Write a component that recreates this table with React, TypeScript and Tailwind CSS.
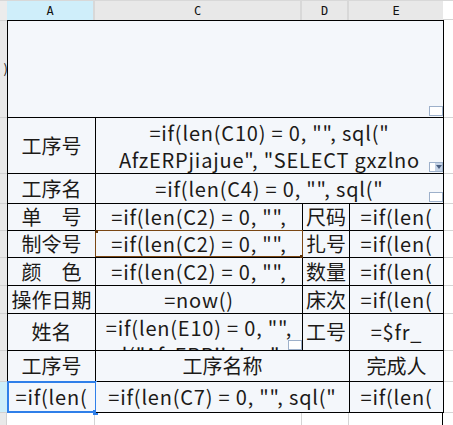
import type { ReactNode } from 'react';

const font = { fontFamily: '"Noto Sans CJK SC", "Noto Sans", sans-serif' };

function Comment({ className = '', drop = false }: { className?: string; drop?: boolean }) {
  return (
    <div className={`absolute flex h-[10px] w-[14px] border border-[#9db0ca] bg-white ${className}`}>
      {drop && (
        <div className="ml-auto flex h-full w-[7px] items-center justify-center bg-[#c5d3e6]">
          <div className="h-0 w-0 border-l-[3px] border-r-[3px] border-t-[4px] border-l-transparent border-r-transparent border-t-[#4a5f80]" />
        </div>
      )}
    </div>
  );
}

function Strip({ h, top = false, active = false, children }: { h: string; top?: boolean; active?: boolean; children?: ReactNode }) {
  return (
    <div
      className={`${h} w-[7px] shrink-0 overflow-hidden border-b border-[#d2d2d2] ${top ? 'border-t' : ''} ${
        active ? 'bg-[#cdeefa]' : 'bg-[#e9e9e9]'
      } flex items-center justify-end`}
    >
      {children}
    </div>
  );
}

function Cell({ w, top = false, left = false, className = '', children }: { w: string; top?: boolean; left?: boolean; className?: string; children?: ReactNode }) {
  return (
    <div
      className={`relative ${w} shrink-0 border-b border-r border-black ${top ? 'border-t' : ''} ${left ? 'border-l' : ''} bg-[#f4f7fb] text-[20px] text-[#1c1a18] ${className}`}
    >
      {children}
    </div>
  );
}

// formula text runs a bit wider than the label text
function Line({ children }: { children: ReactNode }) {
  return <div className="flex justify-center whitespace-nowrap leading-[27px] tracking-[0.8px]">{children}</div>;
}

function Center({ f = false, children }: { f?: boolean; children: ReactNode }) {
  return (
    <div className={`flex h-full items-center justify-center overflow-hidden whitespace-nowrap ${f ? 'tracking-[0.8px]' : ''}`}>
      {children}
    </div>
  );
}

function Right() {
  return <div className="flex-1 border-b border-[#d4d4d4] bg-white" />;
}

const A = 'w-[89px]';
const C = 'w-[207px]';
const D = 'w-[47px]';
const E = 'w-[94px]';
const CDE = 'w-[348px]';
const CD = 'w-[254px]';

export default function App() {
  return (
    <div className="h-[425px] w-[453px] overflow-hidden bg-white" style={font}>
      {/* column headers */}
      <div
        className="flex h-[20px] border-t border-[#d8d8d8] text-[12px] text-[#111]"
        style={{ fontFamily: '"DejaVu Sans Mono", "Liberation Mono", monospace' }}
      >
        <div className="w-[7px] bg-[#ececec]" />
        <div className="flex w-[88px] items-center justify-center border-r-2 border-[#d8d8d8] bg-[#cfeefa]">A</div>
        <div className="flex w-[207px] items-center justify-center border-r-2 border-[#d8d8d8] bg-[#e8e8e8]">C</div>
        <div className="flex w-[47px] items-center justify-center border-r-2 border-[#d8d8d8] bg-[#e8e8e8]">D</div>
        <div className="flex w-[94px] items-center justify-center bg-[#e8e8e8]">E</div>
        <div className="flex-1 border-b border-[#d4d4d4] bg-white" />
      </div>

      {/* big top row */}
      <div className="flex h-[98px]">
        <Strip h="h-[98px]" top>
          <span className="-mr-[1px] text-[13px] text-[#222]">)</span>
        </Strip>
        <Cell w="w-[437px]" top left>
          <Comment className="bottom-[1px] right-0" />
        </Cell>
        <Right />
      </div>

      {/* 工序号 */}
      <div className="flex h-[56px]">
        <Strip h="h-[56px]" />
        <Cell w={A} left>
          <Center>工序号</Center>
        </Cell>
        <Cell w={CDE} className="pt-px">
          <div className="overflow-hidden">
            <Line>=if(len(C10) = 0, "", sql("</Line>
            <Line>AfzERPjiajue", "SELECT gxzlno</Line>
          </div>
          <Comment className="bottom-[1px] right-0" drop />
        </Cell>
        <Right />
      </div>

      {/* 工序名 */}
      <div className="flex h-[30px]">
        <Strip h="h-[30px]" />
        <Cell w={A} left>
          <Center>工序名</Center>
        </Cell>
        <Cell w={CDE}>
          <Center f>=if(len(C4) = 0, "", sql("</Center>
          <Comment className="bottom-[1px] right-0" />
        </Cell>
        <Right />
      </div>

      {/* 单号 */}
      <div className="flex h-[27px]">
        <Strip h="h-[27px]" />
        <Cell w={A} left>
          <Center>单　号</Center>
        </Cell>
        <Cell w={C}>
          <Center f>=if(len(C2) = 0, "",</Center>
        </Cell>
        <Cell w={D}>
          <Center>尺码</Center>
        </Cell>
        <Cell w={E}>
          <Center f>=if(len(</Center>
        </Cell>
        <Right />
      </div>

      {/* 制令号 */}
      <div className="flex h-[27px]">
        <Strip h="h-[27px]" />
        <Cell w={A} left>
          <Center>制令号</Center>
        </Cell>
        <Cell w={C}>
          <Center f>=if(len(C2) = 0, "",</Center>
          <div className="absolute -left-[1px] -top-[1px] h-[27px] w-[208px] border border-[#7a4714]" />
          <div className="absolute -left-[1px] -top-[1px] h-[3px] w-[3px] bg-[#5a3008]" />
          <div className="absolute -bottom-[1px] -right-[1px] h-[3px] w-[3px] bg-[#5a3008]" />
        </Cell>
        <Cell w={D}>
          <Center>扎号</Center>
        </Cell>
        <Cell w={E}>
          <Center f>=if(len(</Center>
        </Cell>
        <Right />
      </div>

      {/* 颜色 */}
      <div className="flex h-[28px]">
        <Strip h="h-[28px]" />
        <Cell w={A} left>
          <Center>颜　色</Center>
        </Cell>
        <Cell w={C}>
          <Center f>=if(len(C2) = 0, "",</Center>
        </Cell>
        <Cell w={D}>
          <Center>数量</Center>
        </Cell>
        <Cell w={E}>
          <Center f>=if(len(</Center>
        </Cell>
        <Right />
      </div>

      {/* 操作日期 */}
      <div className="flex h-[28px]">
        <Strip h="h-[28px]" />
        <Cell w={A} left>
          <Center>操作日期</Center>
        </Cell>
        <Cell w={C}>
          <Center f>=now()</Center>
        </Cell>
        <Cell w={D}>
          <Center>床次</Center>
        </Cell>
        <Cell w={E}>
          <Center f>=if(len(</Center>
        </Cell>
        <Right />
      </div>

      {/* 姓名 */}
      <div className="flex h-[37px]">
        <Strip h="h-[37px]" />
        <Cell w={A} left>
          <Center>姓名</Center>
        </Cell>
        <Cell w={C}>
          <div className="h-full overflow-hidden">
            <Line>=if(len(E10) = 0, "",</Line>
            <Line>sql("AfzERPjiajue", "</Line>
          </div>
          <Comment className="bottom-0 right-0" />
        </Cell>
        <Cell w={D}>
          <Center>工号</Center>
        </Cell>
        <Cell w={E}>
          <Center f>=$fr_</Center>
        </Cell>
        <Right />
      </div>

      {/* 工序号 / 工序名称 / 完成人 */}
      <div className="flex h-[31px]">
        <Strip h="h-[31px]" />
        <Cell w={A} left>
          <Center>工序号</Center>
        </Cell>
        <Cell w={CD}>
          <Center>工序名称</Center>
        </Cell>
        <Cell w={E}>
          <Center>完成人</Center>
        </Cell>
        <Right />
      </div>

      {/* selected formula row */}
      <div className="flex h-[31px]">
        <Strip h="h-[31px]" active />
        <Cell w={A} left>
          <Center f>=if(len(</Center>
          <div className="absolute -left-[1px] -top-[1px] h-[32px] w-[90px] border-2 border-[#2f7fe9]" />
          <div className="absolute -bottom-[3px] -right-[3px] h-[5px] w-[5px] bg-[#2f7fe9]" />
        </Cell>
        <Cell w={CD}>
          <Center f>=if(len(C7) = 0, "", sql("</Center>
        </Cell>
        <Cell w={E}>
          <Center f>=if(len(</Center>
        </Cell>
        <Right />
      </div>

      {/* empty grid below */}
      <div className="flex h-[12px]">
        <div className="w-[7px] border-r border-[#d2d2d2] bg-[#e9e9e9]" />
        <div className="w-[88px] border-r border-[#d4d4d4]" />
        <div className="w-[207px] border-r border-[#d4d4d4]" />
        <div className="w-[47px] border-r border-[#d4d4d4]" />
        <div className="w-[94px] border-r border-black" />
        <div className="flex-1" />
      </div>
    </div>
  );
}
